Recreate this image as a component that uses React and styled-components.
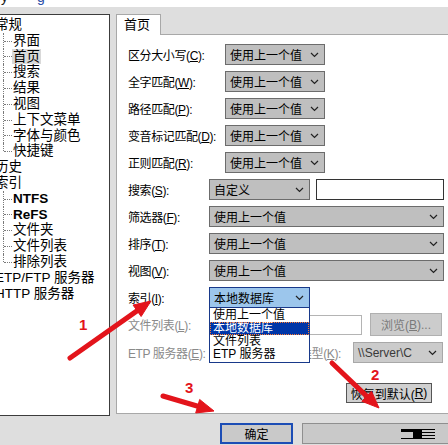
import React from 'react';
import styled, { createGlobalStyle } from 'styled-components';

const GlobalStyle = createGlobalStyle`
  html, body {
    margin: 0;
    padding: 0;
    background: #dedede;
  }
  body {
    font-family: "Liberation Sans", "Noto Sans CJK SC", sans-serif;
  }
`;

const Screen = styled.div`
  position: relative;
  width: 448px;
  height: 445px;
  overflow: hidden;
  background: #dedede;
  display: flex;
  flex-direction: column;
`;

const TopStrip = styled.div`
  height: 7px;
  flex-shrink: 0;
  background: #fff;
  overflow: hidden;
`;

const Cut = styled.div`
  display: flex;
  gap: 29px;
  padding-left: 1px;
  margin-top: -10px;
  font-size: 14px;
  line-height: 14px;
  color: #222;

  span:last-child {
    color: #2a4fa8;
  }
`;

const Main = styled.div`
  display: flex;
  align-items: flex-start;
  padding-top: 7px;
  height: 402px;
  flex-shrink: 0;
`;

const Tree = styled.div`
  width: 110px;
  height: 402px;
  flex-shrink: 0;
  box-sizing: border-box;
  background: #fff;
  border: 1px solid #3c3c3c;
  border-left: none;
  padding-top: 2px;
  font-size: 13.5px;
  line-height: 15.8px;
  overflow: hidden;
  color: #000;
`;

const RootNode = styled.div`
  height: 15.8px;
  margin-left: -5px;
  white-space: nowrap;
`;

const Group = styled.div``;

const ChildNode = styled.div`
  position: relative;
  height: 15.8px;
  padding-left: 13px;
  white-space: nowrap;

  &::before {
    content: '';
    position: absolute;
    left: 3px;
    top: 0;
    height: ${p => (p.$last ? '50%' : '100%')};
    border-left: 1px dotted #7a7a7a;
  }
  &::after {
    content: '';
    position: absolute;
    left: 4px;
    top: 50%;
    width: 8px;
    border-top: 1px dotted #7a7a7a;
  }
`;

const NodeText = styled.span`
  display: inline-block;
  padding: 0 1px;
  margin-left: -1px;
  background: ${p => (p.$selected ? '#d9d9d9' : 'transparent')};
  font-weight: ${p => (p.$latin ? 600 : 400)};
`;

const Right = styled.div`
  margin-left: 6px;
  width: 340px;
  flex-shrink: 0;
  display: flex;
  flex-direction: column;
`;

const TabStrip = styled.div`
  height: 20px;
  display: flex;
`;

const Tab = styled.div`
  position: relative;
  z-index: 1;
  width: 45px;
  height: 21px;
  box-sizing: border-box;
  background: #fff;
  border: 1px solid #a8a8a8;
  border-bottom: none;
  padding-left: 7px;
  font-size: 13px;
  line-height: 19px;
`;

const TabBody = styled.div`
  height: 380px;
  box-sizing: border-box;
  background: #fff;
  border: 1px solid #a8a8a8;
  border-right: none;
  padding: 9px 0 0 11px;
`;

const Row = styled.div`
  display: flex;
  align-items: center;
  height: ${p => p.$h || 21}px;
  margin-bottom: ${p => (p.$mb !== undefined ? p.$mb : 6)}px;
`;

const Label = styled.div`
  width: ${p => p.$w}px;
  flex-shrink: 0;
  margin-left: ${p => p.$ml || 0}px;
  font-size: 12px;
  letter-spacing: -0.4px;
  white-space: nowrap;
  color: ${p => (p.$disabled ? '#8a8a8a' : '#000')};

  u {
    text-decoration: underline;
    text-underline-offset: 1px;
  }
`;

const Select = styled.div`
  position: relative;
  box-sizing: border-box;
  width: ${p => p.$w}px;
  height: 21px;
  flex-shrink: 0;
  display: flex;
  align-items: center;
  justify-content: space-between;
  padding: 0 5px 0 4px;
  font-size: 12px;
  background: ${p => (p.$active ? '#9cc6ec' : p.$disabled ? '#cbcbcb' : '#bfbfbf')};
  border: 1px solid ${p => (p.$active ? '#18398a' : p.$disabled ? '#a8a8a8' : '#6c6c6c')};
  color: ${p => (p.$disabled ? '#3a3a3a' : '#000')};
`;

const Chevron = styled.svg`
  width: 9px;
  height: 6px;
  flex-shrink: 0;
`;

const TextInput = styled.div`
  box-sizing: border-box;
  width: ${p => p.$w}px;
  height: ${p => p.$h || 21}px;
  margin-left: ${p => p.$ml || 0}px;
  flex-shrink: 0;
  background: #fff;
  border: 1px solid ${p => (p.$disabled ? '#b4b4b4' : '#333')};
`;

const Button = styled.div`
  box-sizing: border-box;
  width: ${p => p.$w}px;
  height: ${p => p.$h || 21}px;
  margin-left: ${p => p.$ml || 0}px;
  flex-shrink: 0;
  display: flex;
  align-items: center;
  justify-content: center;
  font-size: 12px;
  background: ${p => (p.$disabled ? '#cccccc' : '#d0d0d0')};
  border: 1px solid ${p => (p.$disabled ? '#b0b0b0' : '#555')};
  color: ${p => (p.$disabled ? '#7a7a7a' : '#000')};
`;

const DropList = styled.div`
  position: absolute;
  top: 19px;
  left: -1px;
  z-index: 5;
  width: 101px;
  box-sizing: border-box;
  background: #fff;
  border: 1px solid #18398a;
  padding: 1px 0;
`;

const DropItem = styled.div`
  height: 13px;
  line-height: 13px;
  padding-left: 3px;
  font-size: 12px;
  white-space: nowrap;
  color: ${p => (p.$selected ? '#fff' : '#000')};
  background: ${p => (p.$selected ? '#0036a8' : 'transparent')};
  outline: ${p => (p.$selected ? '1px dotted #ff7b2e' : 'none')};
  outline-offset: -1px;
`;

const Footer = styled.div`
  display: flex;
  margin-top: 7px;
  padding-left: 220px;
`;

const FooterButton = styled.div`
  box-sizing: border-box;
  width: ${p => p.$w}px;
  height: 21px;
  margin-left: ${p => p.$ml || 0}px;
  flex-shrink: 0;
  display: flex;
  align-items: center;
  justify-content: ${p => (p.$end ? 'flex-end' : 'center')};
  padding-right: ${p => (p.$end ? 15 : 0)}px;
  font-size: 12px;
  background: #c9c9c9;
  border: ${p => (p.$default ? '2px solid #1c4db5' : '1px solid #8f8f8f')};
`;

const Overlay = styled.svg`
  position: absolute;
  left: 0;
  top: 0;
  z-index: 20;
  pointer-events: none;
`;

const ChevronIcon = () => (
  <Chevron viewBox="0 0 9 6">
    <polyline points="1,1 4.5,4.5 8,1" fill="none" stroke="#222" strokeWidth="1.2" />
  </Chevron>
);

const Arrow = ({ x1, y1, x2, y2 }) => {
  const dx = x2 - x1;
  const dy = y2 - y1;
  const len = Math.sqrt(dx * dx + dy * dy);
  const ux = dx / len;
  const uy = dy / len;
  const hl = 17;
  const hw = 7;
  const bx = x2 - ux * hl;
  const by = y2 - uy * hl;
  const pts = [
    [x2, y2],
    [bx - uy * hw, by + ux * hw],
    [bx + uy * hw, by - ux * hw],
  ]
    .map(p => p.join(','))
    .join(' ');
  return (
    <g fill="#e3141b" stroke="#e3141b">
      <line x1={x1} y1={y1} x2={bx + ux * 2} y2={by + uy * 2} strokeWidth="5" strokeLinecap="round" />
      <polygon points={pts} strokeWidth="1" strokeLinejoin="round" />
    </g>
  );
};

const treeGeneral = ['界面', '首页', '搜索', '结果', '视图', '上下文菜单', '字体与颜色', '快捷键'];
const treeIndex = ['NTFS', 'ReFS', '文件夹', '文件列表', '排除列表'];

const matchRows = [
  ['区分大小写', 'C'],
  ['全字匹配', 'W'],
  ['路径匹配', 'P'],
  ['变音标记匹配', 'D'],
  ['正则匹配', 'R'],
];

const KeyLabel = ({ text, k, w, ml, disabled }) => (
  <Label $w={w} $ml={ml} $disabled={disabled}>
    {text}(<u>{k}</u>):
  </Label>
);

export default function App() {
  return (
    <Screen>
      <GlobalStyle />
      <TopStrip>
        <Cut>
          <span>y</span>
          <span>g</span>
        </Cut>
      </TopStrip>

      <Main>
        <Tree>
          <RootNode>常规</RootNode>
          <Group>
            {treeGeneral.map((t, i) => (
              <ChildNode key={t} $last={i === treeGeneral.length - 1}>
                <NodeText $selected={t === '首页'}>{t}</NodeText>
              </ChildNode>
            ))}
          </Group>
          <RootNode>历史</RootNode>
          <RootNode>索引</RootNode>
          <Group>
            {treeIndex.map((t, i) => (
              <ChildNode key={t} $last={i === treeIndex.length - 1}>
                <NodeText $latin={i < 2}>{t}</NodeText>
              </ChildNode>
            ))}
          </Group>
          <RootNode>ETP/FTP 服务器</RootNode>
          <RootNode>HTTP 服务器</RootNode>
        </Tree>

        <Right>
          <TabStrip>
            <Tab>首页</Tab>
          </TabStrip>
          <TabBody>
            {matchRows.map(([t, k]) => (
              <Row key={k}>
                <KeyLabel text={t} k={k} w={97} />
                <Select $w={100}>
                  使用上一个值
                  <ChevronIcon />
                </Select>
              </Row>
            ))}

            <Row>
              <KeyLabel text="搜索" k="S" w={81} />
              <Select $w={101}>
                自定义
                <ChevronIcon />
              </Select>
              <TextInput $w={128} $ml={6} />
            </Row>

            {[
              ['筛选器', 'F'],
              ['排序', 'T'],
              ['视图', 'V'],
            ].map(([t, k]) => (
              <Row key={k}>
                <KeyLabel text={t} k={k} w={81} />
                <Select $w={235}>
                  使用上一个值
                  <ChevronIcon />
                </Select>
              </Row>
            ))}

            <Row $mb={5}>
              <KeyLabel text="索引" k="I" w={81} />
              <Select $w={101} $active>
                本地数据库
                <ChevronIcon />
                <DropList>
                  <DropItem>使用上一个值</DropItem>
                  <DropItem $selected>本地数据库</DropItem>
                  <DropItem>文件列表</DropItem>
                  <DropItem>ETP 服务器</DropItem>
                </DropList>
              </Select>
            </Row>

            <Row $h={23} $mb={6}>
              <KeyLabel text="文件列表" k="L" w={81} disabled />
              <TextInput $w={153} $h={20} $disabled />
              <Button $w={72} $h={23} $ml={8} $disabled>
                浏览(<u>B</u>)...
              </Button>
            </Row>

            <Row $mb={20}>
              <KeyLabel text="ETP 服务器" k="E" w={81} disabled />
              <TextInput $w={66} $disabled />
              <KeyLabel text="类型" k="K" w={53} ml={25} disabled />
              <Select $w={90} $disabled>
                \\Server\C
                <ChevronIcon />
              </Select>
            </Row>

            <Row $h={20}>
              <Button $w={86} $h={20} $ml={218}>
                恢复到默认(<u>R</u>)
              </Button>
            </Row>
          </TabBody>
        </Right>
      </Main>

      <Footer>
        <FooterButton $w={73} $default>
          确定
        </FooterButton>
        <FooterButton $w={150} $ml={9} $end>
          <svg width="35" height="12" viewBox="0 0 35 12">
            <rect x="0" y="1" width="34" height="1" fill="#000" />
            <rect x="0" y="2" width="12" height="2" fill="#000" />
            <rect x="12" y="1" width="9" height="10" fill="#000" />
            <rect x="21" y="4" width="13" height="1" fill="#000" />
            <rect x="21" y="7" width="13" height="1" fill="#000" />
            <rect x="0" y="10" width="34" height="1" fill="#000" />
          </svg>
        </FooterButton>
      </Footer>

      <Overlay width="448" height="445" viewBox="0 0 448 445">
        <Arrow x1={70} y1={358} x2={151} y2={301} />
        <Arrow x1={332} y1={363} x2={379} y2={408} />
        <Arrow x1={163} y1={396} x2={214} y2={411} />
        <g fill="#e3141b" fontFamily="Liberation Sans, sans-serif" fontWeight="bold" fontSize="15">
          <text x="79" y="330">1</text>
          <text x="371" y="380">2</text>
          <text x="185" y="393">3</text>
        </g>
      </Overlay>
    </Screen>
  );
}
